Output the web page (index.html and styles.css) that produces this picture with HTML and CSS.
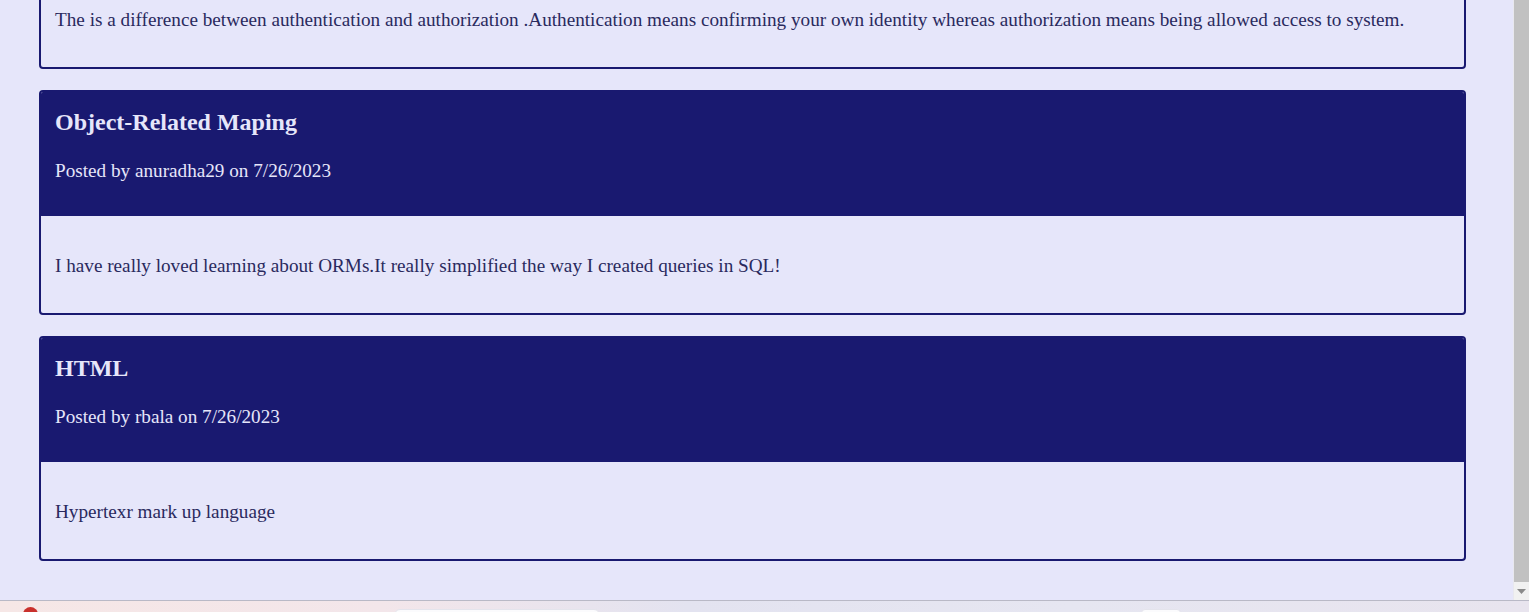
FILE: index.html
```html
<!DOCTYPE html>
<html lang="en">
<head>
<meta charset="utf-8">
<title>Posts</title>
<link rel="stylesheet" href="styles.css">
</head>
<body>
<div class="window">
  <div class="viewport">
    <main class="feed">
      <article class="card">
        <header class="card-header">
          <h2 class="card-title">Authentication vs Authorization</h2>
          <p class="card-meta">Posted by anuradha29 on 7/26/2023</p>
        </header>
        <div class="card-body">
          <p>The is a difference between authentication and authorization .Authentication means confirming your own identity whereas authorization means being allowed access to system.</p>
        </div>
      </article>
      <article class="card">
        <header class="card-header">
          <h2 class="card-title">Object-Related Maping</h2>
          <p class="card-meta">Posted by anuradha29 on 7/26/2023</p>
        </header>
        <div class="card-body">
          <p>I have really loved learning about ORMs.It really simplified the way I created queries in SQL!</p>
        </div>
      </article>
      <article class="card">
        <header class="card-header">
          <h2 class="card-title">HTML</h2>
          <p class="card-meta">Posted by rbala on 7/26/2023</p>
        </header>
        <div class="card-body">
          <p>Hypertexr mark up language</p>
        </div>
      </article>
    </main>
    <div class="scrollbar">
      <div class="scroll-thumb"></div>
      <div class="scroll-arrow"><svg width="9" height="6" viewBox="0 0 9 6"><path d="M0 0H9L4.5 5Z" fill="#8a8a8a"/></svg></div>
    </div>
  </div>
  <div class="taskbar">
    <span class="task-dot"></span>
    <span class="task-pill task-pill-wide"></span>
    <span class="task-pill task-pill-small"></span>
  </div>
</div>
</body>
</html>
```
FILE: styles.css
```css
html, body {
  margin: 0;
  padding: 0;
  height: 100%;
  overflow: hidden;
}
body {
  background: #e6e6fa;
  font-family: "Liberation Serif", "Times New Roman", serif;
}
.window {
  display: flex;
  flex-direction: column;
  height: 612px;
}
.viewport {
  flex: 1;
  display: flex;
  min-height: 0;
  overflow: hidden;
}
.feed {
  flex: 1;
  display: flex;
  flex-direction: column;
  gap: 21px;
  padding: 0 47px 0 39px;
  margin-top: -156px;
}
.card {
  border: 2px solid #191970;
  border-radius: 4px;
  background: #e6e6fa;
  overflow: hidden;
  flex: none;
}
.card-header {
  background: #191970;
  color: #e6e6fa;
  padding: 17px 14px 34px;
}
.card-title {
  margin: 0;
  font-size: 24px;
  font-weight: bold;
  line-height: 27px;
}
.card-meta {
  margin: 24px 0 0;
  font-size: 19.2px;
  line-height: 22px;
}
.card-body {
  padding: 39px 14px 36px;
  color: #2a2a5e;
  font-size: 19.2px;
}
.card-body p {
  margin: 0;
  line-height: 22px;
}
.scrollbar {
  width: 15px;
  flex: none;
  display: flex;
  flex-direction: column;
  background: #f1f1f1;
  border-left: 1px solid #e8e8ee;
}
.scroll-thumb {
  flex: 1;
  background: #c1c1c1;
  margin-bottom: 2px;
}
.scroll-arrow {
  height: 16px;
  display: flex;
  align-items: center;
  justify-content: center;
}
.taskbar {
  height: 11px;
  flex: none;
  border-top: 1px solid #b9b9c6;
  background: linear-gradient(90deg, #f6e7e6 0%, #f3e6ea 25%, #e3e3f0 45%, #e6e6f1 70%, #e8e4ee 100%);
  position: relative;
  overflow: hidden;
}
.task-dot {
  position: absolute;
  left: 23px;
  top: 6px;
  width: 15px;
  height: 15px;
  border-radius: 50%;
  background: #c9302c;
}
.task-pill {
  position: absolute;
  top: 8px;
  height: 14px;
  border-radius: 6px;
  background: #fbfbfd;
  border: 1px solid #e4e4ec;
}
.task-pill-wide {
  left: 394px;
  width: 204px;
}
.task-pill-small {
  left: 1141px;
  width: 38px;
  border-radius: 4px;
}
```
